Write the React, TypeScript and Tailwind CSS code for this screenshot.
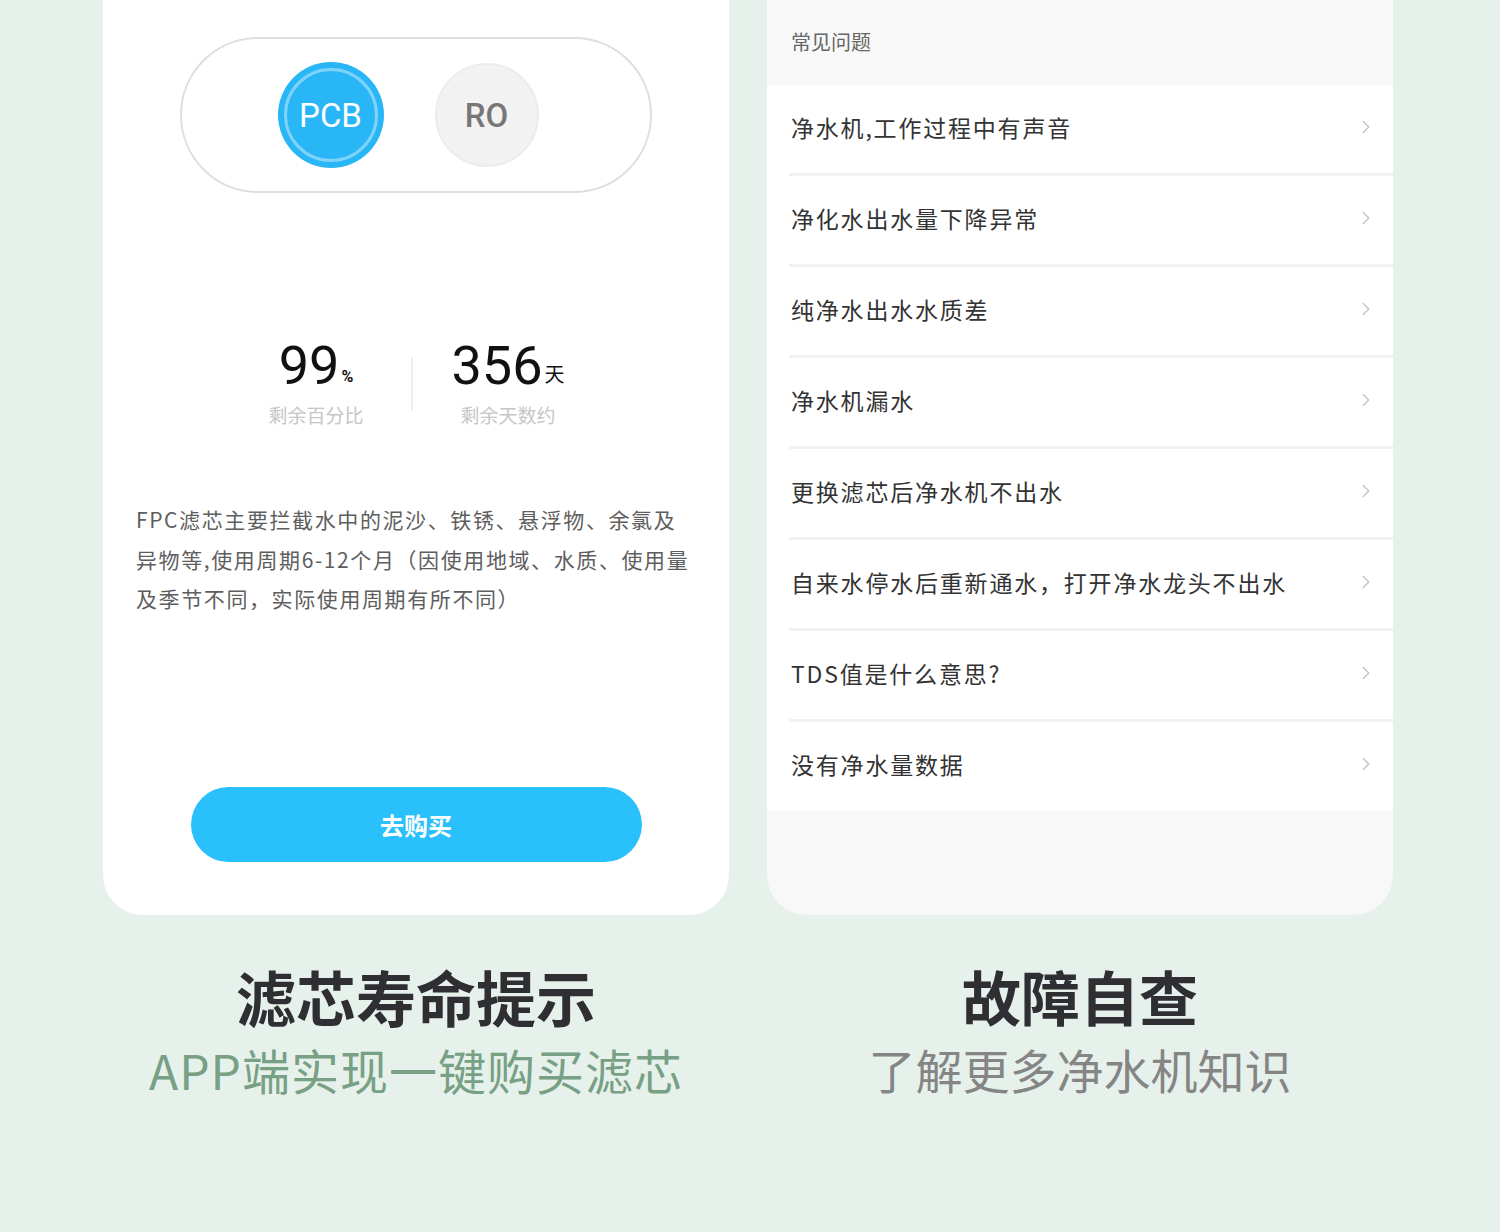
import { ChevronRight } from "lucide-react";

const faqs = [
  "净水机,工作过程中有声音",
  "净化水出水量下降异常",
  "纯净水出水水质差",
  "净水机漏水",
  "更换滤芯后净水机不出水",
  "自来水停水后重新通水，打开净水龙头不出水",
  "TDS值是什么意思?",
  "没有净水量数据",
];

const cjk = { fontFamily: '"Noto Sans CJK SC", "Noto Sans", sans-serif' };

function FilterCard() {
  return (
    <div className="w-[626px] h-[915px] bg-white rounded-b-[40px] flex flex-col items-center">
      {/* filter switch */}
      <div className="mt-[37px] w-[472px] h-[156px] rounded-full border-2 border-[#dedede] flex items-center justify-center gap-[51px] pr-[16px]">
        <div className="w-[106px] h-[106px] rounded-full bg-[#29b6f6] flex items-center justify-center">
          <div className="w-[94px] h-[94px] rounded-full border-[3px] border-[#7fd3fa] flex items-center justify-center">
            <span className="text-white text-[33px] font-['Roboto'] leading-none">PCB</span>
          </div>
        </div>
        <div className="w-[104px] h-[104px] rounded-full bg-[#f2f2f2] border-2 border-[#ececec] flex items-center justify-center">
          <span className="text-[#777] text-[33px] font-['Roboto'] font-medium leading-none">RO</span>
        </div>
      </div>

      {/* stats */}
      <div className="mt-[146px] flex items-center ml-[-8px]">
        <div className="w-[150px] flex flex-col items-center">
          <div className="flex items-end text-[#111] font-['Roboto']">
            <span className="text-[54px] leading-none">99</span>
            <span className="text-[16px] font-bold mb-[4px] ml-[2px]">%</span>
          </div>
          <span className="mt-[12px] text-[19px] text-[#c6c6c6] leading-none" style={cjk}>剩余百分比</span>
        </div>
        <div className="w-[2px] h-[54px] bg-[#eeeeee] mx-[20px] mt-[4px]" />
        <div className="w-[150px] flex flex-col items-center">
          <div className="flex items-end text-[#111] font-['Roboto']">
            <span className="text-[54px] leading-none">356</span>
            <span className="text-[20px] mb-[4px] ml-[2px]" style={cjk}>天</span>
          </div>
          <span className="mt-[12px] text-[19px] text-[#c6c6c6] leading-none" style={cjk}>剩余天数约</span>
        </div>
      </div>

      <p className="mt-[76px] self-start ml-[33px] w-[580px] text-[21px] tracking-[1.6px] leading-[39.5px] text-[#5e5e5e] whitespace-nowrap" style={cjk}>
        FPC滤芯主要拦截水中的泥沙、铁锈、悬浮物、余氯及
        <br />
        异物等,使用周期6-12个月（因使用地域、水质、使用量
        <br />
        及季节不同，实际使用周期有所不同）
      </p>

      <button className="mt-auto mb-[53px] w-[451px] h-[75px] rounded-full bg-[#29c0fb] text-white text-[24px] font-bold" style={cjk}>
        去购买
      </button>
    </div>
  );
}

function FaqCard() {
  return (
    <div className="w-[626px] h-[915px] bg-[#f8f8f8] rounded-b-[40px] flex flex-col overflow-hidden">
      <div className="h-[85px] flex items-center pl-[24px] pb-[2px]">
        <span className="text-[20px] text-[#666]" style={cjk}>常见问题</span>
      </div>
      <div className="bg-white flex flex-col">
        {faqs.map((q, i) => (
          <div key={q} className="flex flex-col">
            {i > 0 && <div className="ml-[22px] h-[3px] bg-[#f1f1f1]" />}
            <div className="h-[88px] flex items-center justify-between pl-[24px] pr-[16px] pb-[4px]">
              <span className="text-[23px] tracking-[1.8px] text-[#333]" style={cjk}>{q}</span>
              <ChevronRight className="w-[22px] h-[22px] text-[#c4c4c4]" strokeWidth={1.6} />
            </div>
          </div>
        ))}
      </div>
    </div>
  );
}

export default function App() {
  return (
    <div className="w-[1500px] h-[1232px] bg-[#e7f1eb] flex flex-col" style={cjk}>
      <div className="flex gap-[38px] pl-[103px]">
        <FilterCard />
        <FaqCard />
      </div>
      <div className="flex gap-[38px] pl-[103px] mt-[47px]">
        <div className="w-[626px] flex flex-col items-center">
          <h2 className="text-[60px] font-bold text-[#2e2e33] leading-[68px]">滤芯寿命提示</h2>
          <p className="mt-[10px] text-[48px] tracking-[1px] text-[#77a084] leading-[58px]">APP端实现一键购买滤芯</p>
        </div>
        <div className="w-[626px] flex flex-col items-center">
          <h2 className="text-[59px] font-bold text-[#2e2e33] leading-[68px]">故障自查</h2>
          <p className="mt-[10px] text-[47px] text-[#858585] leading-[58px]">了解更多净水机知识</p>
        </div>
      </div>
    </div>
  );
}
